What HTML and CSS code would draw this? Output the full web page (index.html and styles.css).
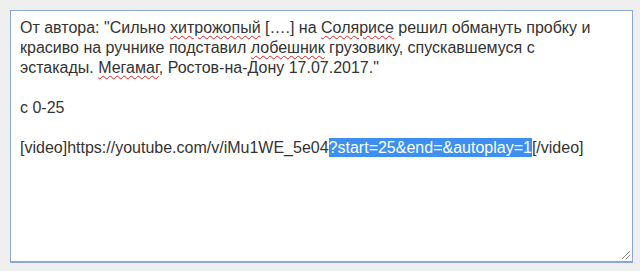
FILE: index.html
```html
<!DOCTYPE html>
<html lang="en">
<head>
    <meta charset="UTF-8">
    <title>Редактор</title>
    <link rel="stylesheet" href="styles.css">
</head>
<body>
    <div class="editor">
        <p>От автора: "Сильно <span class="typo">хитрожопый</span> [….] на <span class="typo">Солярисе</span> решил обмануть пробку и<br>красиво на ручнике подставил <span class="typo">лобешник</span> грузовику, спускавшемуся с<br>эстакады. <span class="typo">Мегамаг</span>, Ростов-на-Дону 17.07.2017."</p>
        <p>с 0-25</p>
        <p>[video]https://youtube.com/v/iMu1WE_5e04<span class="selected">?start=25&amp;end=&amp;autoplay=1</span>[/video]</p>
        <!-- resize grip -->
        <svg class="grip" width="10" height="10" viewBox="0 0 10 10">
            <path d="M1 9 L9 1 M5 9 L9 5" stroke="#888" stroke-width="1"/>
        </svg>
    </div>
</body>
</html>
```

FILE: styles.css
```css
html, body {
    margin: 0;
    padding: 0;
    background: #efefef;
}
body {
    padding: 10px 7px 8px 10px;
}
.editor {
    position: relative;
    box-sizing: border-box;
    width: 623px;
    height: 253px;
    background: #fff;
    border: 1px solid #8aa6e0;
    border-bottom-width: 2px;
    padding: 7px 9px;
    font-family: "Liberation Sans", Arial, sans-serif;
    font-size: 16px;
    line-height: 20px;
    color: #333;
    white-space: nowrap;
}
.editor p {
    margin: 0 0 20px 0;
}
.typo {
    text-decoration: underline wavy #e02020;
    text-decoration-thickness: 1px;
    text-underline-offset: 2px;
}
.selected {
    background: #3d8ff0;
    color: #fff;
    padding: 1px 0;
}
.grip {
    position: absolute;
    right: 1px;
    bottom: 1px;
}
```
